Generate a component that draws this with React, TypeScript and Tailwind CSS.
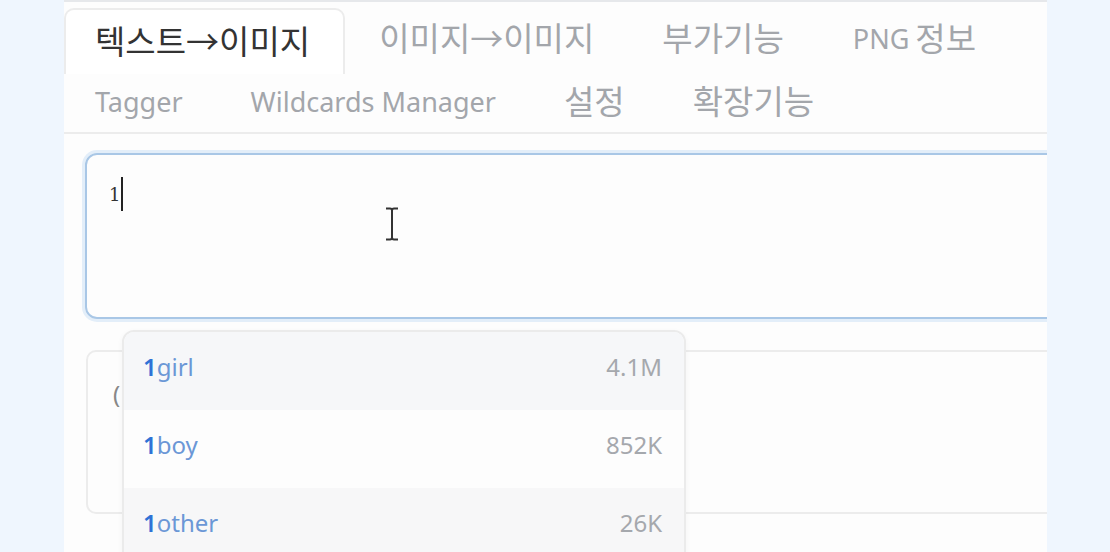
import React from "react";

const font = { fontFamily: '"Noto Sans", "Noto Sans CJK KR", sans-serif' };

function Label({ parts }: { parts: [string, boolean][] }) {
  return (
    <>
      {parts.map(([t, ko], i) => (
        <span key={i} className={`whitespace-pre ${ko ? "text-[33px]" : "text-[27px]"}`}>
          {t}
        </span>
      ))}
    </>
  );
}

function Tab({ parts, selected, row }: { parts: [string, boolean][]; selected?: boolean; row: 1 | 2 }) {
  const h = row === 1 ? "h-[66px]" : "h-[60px]";
  if (selected) {
    return (
      <div
        className={`${h} pl-[29px] pr-[33px] flex items-center border-2 border-b-0 border-[#ececec] rounded-t-[10px] bg-white text-[#333] -mb-[2px]`}
      >
        <Label parts={parts} />
      </div>
    );
  }
  return (
    <div className={`${h} px-[34px] flex items-center text-[#a3a6ab]`}>
      <Label parts={parts} />
    </div>
  );
}

function Row({ tag, count, bg }: { tag: string; count: string; bg: string }) {
  return (
    <div className={`h-[78px] flex items-center justify-between pl-[19px] pr-[22px] pb-[8px] ${bg}`}>
      <span className="text-[24px] text-[#6b97d6]">
        <span className="font-semibold text-[#2f72d6]">1</span>
        {tag}
      </span>
      <span className="text-[24px] text-[#a5a8ad]">{count}</span>
    </div>
  );
}

export default function App() {
  return (
    <div className="w-[1110px] h-[552px] bg-[#eff6fe] flex overflow-hidden" style={font}>
      <div className="ml-[64px] w-[983px] h-full bg-[#fdfdfd] border-t-2 border-[#e6e8eb] flex flex-col relative overflow-hidden">
        <div className="pt-[4px] border-b-2 border-[#ececec]">
          <div className="flex items-end">
            <Tab parts={[["텍스트→이미지", true]]} selected row={1} />
            <Tab parts={[["이미지→이미지", true]]} row={1} />
            <Tab parts={[["부가기능", true]]} row={1} />
            <div className="h-[66px] pl-[35px] pr-[34px] flex items-center text-[#a3a6ab]">
              <span className="text-[27px]">PNG</span>
              <span className="text-[33px] ml-[6px]">정보</span>
            </div>
          </div>
          <div className="flex items-center -ml-[3px]">
            <Tab parts={[["Tagger", false]]} row={2} />
            <Tab parts={[["Wildcards Manager", false]]} row={2} />
            <Tab parts={[["설정", true]]} row={2} />
            <Tab parts={[["확장기능", true]]} row={2} />
          </div>
        </div>
        <div className="pl-[21px] pt-[19px] flex flex-col">
          <div className="relative h-[166px] w-[1000px] border-2 border-[#a9c7e6] rounded-[12px] shadow-[0_0_0_3px_#e3eef9]">
            <div className="absolute left-[22px] top-[22px] flex items-center">
              <span className="text-[18px] text-[#333]" style={{ fontFamily: '"DejaVu Serif", serif' }}>1</span>
              <span className="w-[2px] h-[34px] bg-[#222] ml-[1px]" />
            </div>
            <svg className="absolute left-[297px] top-[52px]" width="16" height="34" viewBox="0 0 16 34">
              <path d="M2 1.5 H6 Q8 1.5 8 3.5 V30.5 Q8 32.5 6 32.5 H2 M14 1.5 H10 Q8 1.5 8 3.5 M8 30.5 Q8 32.5 10 32.5 H14" fill="none" stroke="#333" strokeWidth="2" />
            </svg>
          </div>
          <div className="relative mt-[31px] ml-[1px] h-[164px] w-[1000px] border-2 border-[#ececec] rounded-[10px]">
            <span className="absolute left-[25px] top-[24px] text-[24px] text-[#888]">(</span>
          </div>
        </div>
        <div className="absolute left-[58px] top-[328px] w-[564px] h-[240px] border-2 border-[#ebebeb] rounded-t-[12px] overflow-hidden bg-white shadow-[0_2px_6px_rgba(0,0,0,0.04)]">
          <Row tag="girl" count="4.1M" bg="bg-[#f6f7f9]" />
          <Row tag="boy" count="852K" bg="bg-[#fdfdfd]" />
          <Row tag="other" count="26K" bg="bg-[#f7f7f8]" />
        </div>
      </div>
    </div>
  );
}
